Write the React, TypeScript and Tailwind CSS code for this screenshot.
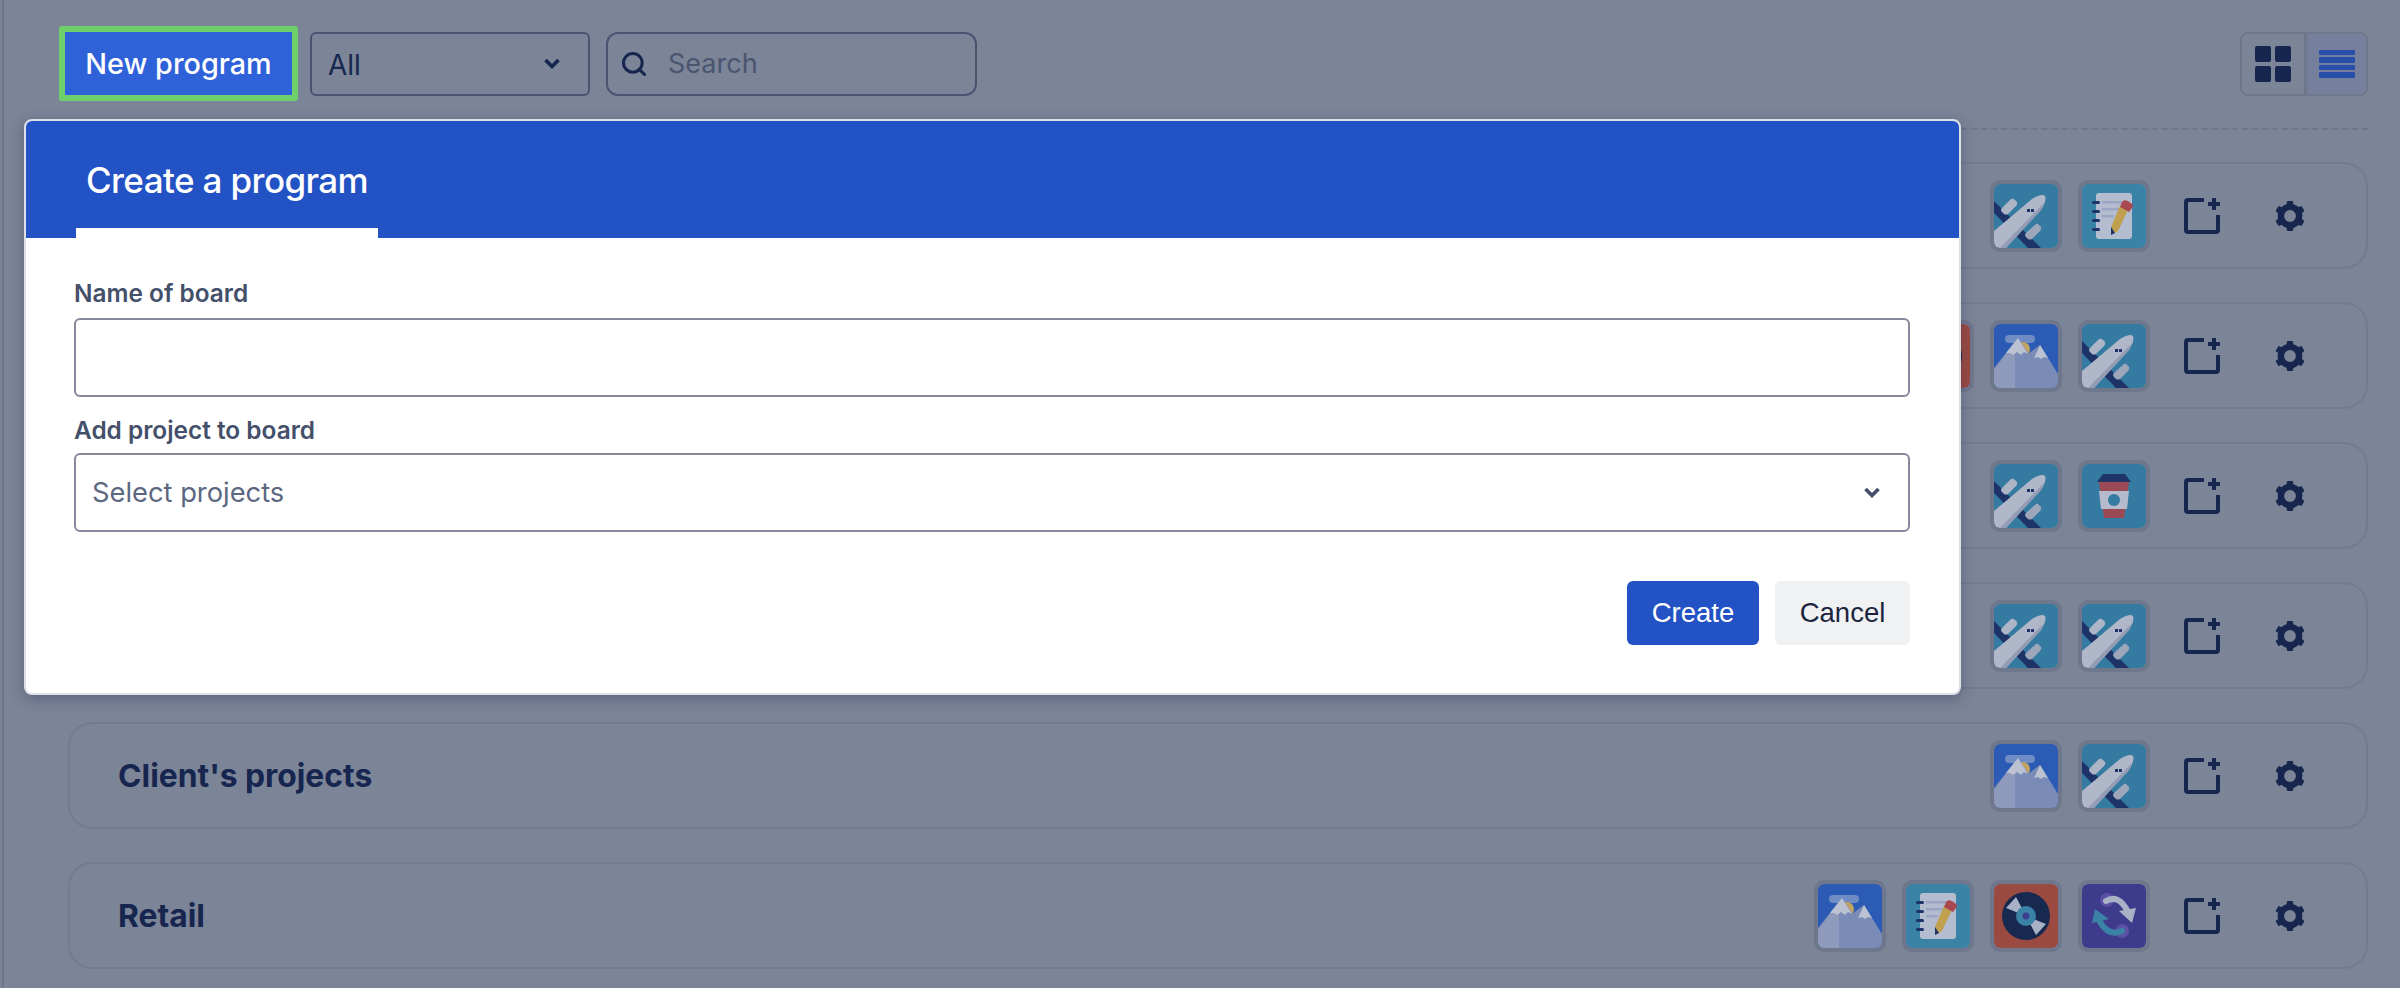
import { Search } from 'lucide-react';

type IconName = 'plane' | 'notes' | 'mountain' | 'vinyl' | 'sync' | 'coffee';

type Row = {
  title?: string;
  icons: IconName[];
};

const rows: Row[] = [
  { icons: ['plane', 'notes'] },
  { icons: ['vinyl', 'mountain', 'plane'] },
  { icons: ['plane', 'coffee'] },
  { icons: ['plane', 'plane'] },
  { title: "Client's projects", icons: ['mountain', 'plane'] },
  { title: 'Retail', icons: ['mountain', 'notes', 'vinyl', 'sync'] },
];

const PlaneArt = () => (
  <>
    <rect width="64" height="64" fill="#357aa0" />
    <path d="M0 17 L47 64 L34 64 L0 29 Z" fill="#1e3468" />
    <path d="M8 24 L17 15 Q19 14 21 16 L23 18 Q24 20 22 22 L14 30 Q12 31 10 30 L8 28 Q6 26 8 24 Z" fill="#aeb5c7" />
    <path d="M32 49 L42 40 Q44 39 45 41 L47 43 Q48 45 46 47 L38 55 Q36 56 34 55 L32 53 Q30 51 32 49 Z" fill="#9ea6bc" />
    <path d="M0 47 L38 15 Q48 9 51 12 Q53 16 47 26 L12 64 L0 64 Z" fill="#b0b7c9" />
    <path d="M6 64 L50 19 Q49 23 47 26 L12 64 Z" fill="#939cb4" />
    <rect x="33" y="25" width="3" height="3" fill="#1e3468" />
    <rect x="37" y="25" width="3" height="3" fill="#1e3468" />
  </>
);

const NotesArt = () => (
  <>
    <rect width="64" height="64" fill="#3a82a6" />
    <rect x="14" y="9" width="36" height="46" rx="3" fill="#b4bccf" />
    <rect x="20" y="17" width="22" height="2.5" fill="#9ba6c3" />
    <rect x="20" y="24" width="20" height="2.5" fill="#9ba6c3" />
    <rect x="20" y="31" width="12" height="2.5" fill="#9ba6c3" />
    <rect x="10" y="17" width="8" height="3" rx="1.5" fill="#1e3468" />
    <rect x="10" y="26" width="8" height="3" rx="1.5" fill="#1e3468" />
    <rect x="10" y="35" width="8" height="3" rx="1.5" fill="#1e3468" />
    <rect x="10" y="44" width="8" height="3" rx="1.5" fill="#1e3468" />
    <path d="M38 22 L46 26 L36 47 L29 51 L29 43 Z" fill="#c0a04e" />
    <path d="M29 43 L29 51 L33 49 Z" fill="#1e3468" />
    <path d="M40 18 Q42 15 46 17 L50 20 Q52 22 50 24 L47 28 L38 23 Z" fill="#a8484f" />
  </>
);

const MountainArt = () => (
  <>
    <rect width="64" height="64" fill="#2b5bb5" />
    <rect x="11" y="11" width="30" height="8" rx="4" fill="#6f8cc4" />
    <circle cx="29" cy="25" r="7" fill="#bfa35f" />
    <path d="M46 21 L64 50 L64 64 L20 64 L20 40 Z" fill="#7a8bb7" />
    <path d="M24 14 L36 32 L42 48 L20 64 L0 64 L0 44 Z" fill="#7a8bb7" />
    <path d="M24 14 L0 46 V64 H21 V18 Z" fill="#8f9bbd" />
    <path d="M24 14 L34 30 L30 28 L27 31 L23 28 L19 31 L16 29 L12 29 Z" fill="#bcc2d2" />
    <path d="M46 21 L54 34 L50 33 L47 35 L44 33 L40 34 Z" fill="#bcc2d2" />
  </>
);

const VinylArt = () => (
  <>
    <rect width="64" height="64" fill="#9b4a42" />
    <circle cx="32" cy="32" r="24" fill="#17294f" />
    <path d="M32 32 L12 24 L22 13 Z M32 32 L52 40 L42 51 Z" fill="#a9b1c6" />
    <circle cx="32" cy="32" r="10" fill="#3a82a6" />
    <circle cx="32" cy="32" r="3.5" fill="#3f3d8f" />
  </>
);

const SyncArt = () => (
  <>
    <rect width="64" height="64" fill="#3e3a8c" />
    <circle cx="25" cy="16" r="7" fill="#5a50a6" />
    <circle cx="40" cy="47" r="7" fill="#5a50a6" />
    <path d="M24 17 Q36 10 45 26" fill="none" stroke="#a9b1c6" strokeWidth="6" strokeLinecap="round" />
    <path d="M37 27 L54 24 L50 39 Z" fill="#a9b1c6" />
    <path d="M40 47 Q27 53 18 38" fill="none" stroke="#3a82a6" strokeWidth="6" strokeLinecap="round" />
    <path d="M10 39 L13 25 L27 35 Z" fill="#3a82a6" />
  </>
);

const CoffeeArt = () => (
  <>
    <rect width="64" height="64" fill="#357aa0" />
    <path d="M21 10 H43 L49 18 H15 Z" fill="#1e3468" />
    <path d="M17 18 H47 L42 54 H22 Z" fill="#9b4a55" />
    <path d="M17 27 H47 L45 45 H19 Z" fill="#b4bbcd" />
    <circle cx="32" cy="36" r="6" fill="#357aa0" />
  </>
);

const art: Record<IconName, () => React.ReactElement> = {
  plane: PlaneArt,
  notes: NotesArt,
  mountain: MountainArt,
  vinyl: VinylArt,
  sync: SyncArt,
  coffee: CoffeeArt,
};

const ProjectIcon = ({ name }: { name: IconName }) => {
  const Art = art[name];
  return (
    <div className="w-[72px] h-[72px] rounded-[10px] border-4 border-[#6f778c] overflow-hidden">
      <svg viewBox="0 0 64 64" className="block w-full h-full rounded-[6px]">
        <Art />
      </svg>
    </div>
  );
};

const AddIcon = () => (
  <svg viewBox="0 0 36 36" className="w-[36px] h-[36px]" fill="none" stroke="#16264f" strokeWidth="4">
    <path d="M20 2 H4 Q2 2 2 4 V32 Q2 34 4 34 H32 Q34 34 34 32 V17" />
    <path d="M30 0 V12 M24 6 H36" />
  </svg>
);

const GearIcon = () => (
  <svg viewBox="0 0 28 28" className="w-[30px] h-[30px]" fill="#16264f">
    <circle cx="14" cy="14" r="8.5" fill="none" stroke="#16264f" strokeWidth="6" />
    <rect x="11" y="0" width="6" height="5" rx="1" />
    <rect x="11" y="23" width="6" height="5" rx="1" />
    <rect x="11" y="0" width="6" height="5" rx="1" transform="rotate(60 14 14)" />
    <rect x="11" y="23" width="6" height="5" rx="1" transform="rotate(60 14 14)" />
    <rect x="11" y="0" width="6" height="5" rx="1" transform="rotate(120 14 14)" />
    <rect x="11" y="23" width="6" height="5" rx="1" transform="rotate(120 14 14)" />
  </svg>
);

const Chevron = ({ color }: { color: string }) => (
  <svg viewBox="0 0 16 11" className="w-[16px] h-[11px]" fill="none" stroke={color} strokeWidth="3.6">
    <path d="M1.5 2 L8 8.5 L14.5 2" />
  </svg>
);

const BoardRow = ({ row }: { row: Row }) => (
  <div className="h-[107px] rounded-[24px] border-2 border-[#737b90] pl-[48px] pr-[61px] flex items-center justify-between">
    <h3 className="text-[31.8px] font-bold text-[#16264f]">{row.title}</h3>
    <div className="flex items-center">
      <div className="flex gap-[16px]">
        {row.icons.map((name, i) => (
          <ProjectIcon key={i} name={name} />
        ))}
      </div>
      <div className="ml-[34px] mr-[55px]">
        <AddIcon />
      </div>
      <GearIcon />
    </div>
  </div>
);

const CreateModal = () => (
  <div className="absolute left-[24px] top-[119px] w-[1937px] rounded-[8px] border-2 border-[#dde0e7] bg-white overflow-hidden shadow-[0_4px_14px_rgba(30,40,80,0.35)]">
    <div className="h-[117px] bg-[#2352c4] pl-[50px] flex">
      <div className="h-full w-[302px] border-b-[10px] border-white pl-[10px] pt-[12px] flex items-center">
        <h2 className="text-[35px] tracking-[-0.6px] font-medium text-white whitespace-nowrap">Create a program</h2>
      </div>
    </div>
    <div className="pl-[48px] pr-[49px] pt-[37px] pb-[48px]">
      <label className="block h-[36px] leading-[36px] mb-[7px] text-[24.4px] font-semibold text-[#44506a]">Name of board</label>
      <input className="block w-full h-[79px] rounded-[6px] border-2 border-[#85899b] bg-white" />
      <label className="block h-[36px] leading-[36px] mt-[15px] mb-[5px] text-[24.4px] font-semibold text-[#44506a]">Add project to board</label>
      <div className="h-[79px] rounded-[6px] border-2 border-[#85899b] pl-[16px] pr-[28px] flex items-center justify-between">
        <span className="pt-[2px] text-[27.3px] text-[#5c6780]">Select projects</span>
        <Chevron color="#44506a" />
      </div>
      <div className="mt-[49px] flex justify-end gap-[16px] font-['Liberation_Sans',sans-serif] text-[27.5px]">
        <button className="w-[132px] h-[64px] rounded-[6px] bg-[#2352c4] text-white">Create</button>
        <button className="w-[135px] h-[64px] rounded-[6px] bg-[#eff1f3] text-[#1c2540]">Cancel</button>
      </div>
    </div>
  </div>
);

export default function App() {
  return (
    <div className="relative h-[988px] overflow-hidden bg-[#7c8497] font-[Inter,sans-serif] flex">
      <div className="w-[4px] border-r-2 border-[#6f778c]" />
      <div className="flex-1 pl-[55px] pr-[32px]">
        <div className="pt-[26px] flex items-center">
          <button className="w-[239px] h-[75px] border-[6px] border-[#6fcf6a] rounded-[3px] bg-[#2f62d9] text-white text-[28.8px] font-medium">
            New program
          </button>
          <div className="ml-[12px] w-[280px] h-[64px] rounded-[6px] border-2 border-[#4a5470] pl-[16px] pr-[28px] flex items-center justify-between text-[28px] text-[#16264f]">
            <span className="pt-[3px]">All</span>
            <Chevron color="#16264f" />
          </div>
          <div className="ml-[16px] w-[371px] h-[64px] rounded-[12px] border-2 border-[#4a5470] pl-[12px] flex items-center gap-[20px]">
            <Search size={28} strokeWidth={2.6} color="#16264f" />
            <span className="pt-[2px] text-[27px] text-[#4a5570]">Search</span>
          </div>
          <div className="ml-auto w-[128px] h-[64px] rounded-[8px] border-2 border-[#6f778c] flex">
            <div className="flex-1 grid grid-cols-[16px_16px] grid-rows-[16px_16px] gap-[4px] content-center justify-center">
              <div className="rounded-[2px] bg-[#16264f]" />
              <div className="rounded-[2px] bg-[#16264f]" />
              <div className="rounded-[2px] bg-[#16264f]" />
              <div className="rounded-[2px] bg-[#16264f]" />
            </div>
            <div className="w-[62px] border-l-[3px] border-[#6f778c] bg-[#76809c] rounded-r-[6px] flex flex-col items-center justify-center gap-[2px]">
              <div className="w-[36px] h-[5.5px] bg-[#274fa9] rounded-[1px]" />
              <div className="w-[36px] h-[5.5px] bg-[#274fa9] rounded-[1px]" />
              <div className="w-[36px] h-[5.5px] bg-[#274fa9] rounded-[1px]" />
              <div className="w-[36px] h-[5.5px] bg-[#274fa9] rounded-[1px]" />
            </div>
          </div>
        </div>
        <div className="ml-[9px] mt-[27px] border-t-2 border-dashed border-[#6f778c]" />
        <div className="ml-[9px] mt-[32px] flex flex-col gap-[33px]">
          {rows.map((row, i) => (
            <BoardRow key={i} row={row} />
          ))}
        </div>
      </div>
      <CreateModal />
    </div>
  );
}
